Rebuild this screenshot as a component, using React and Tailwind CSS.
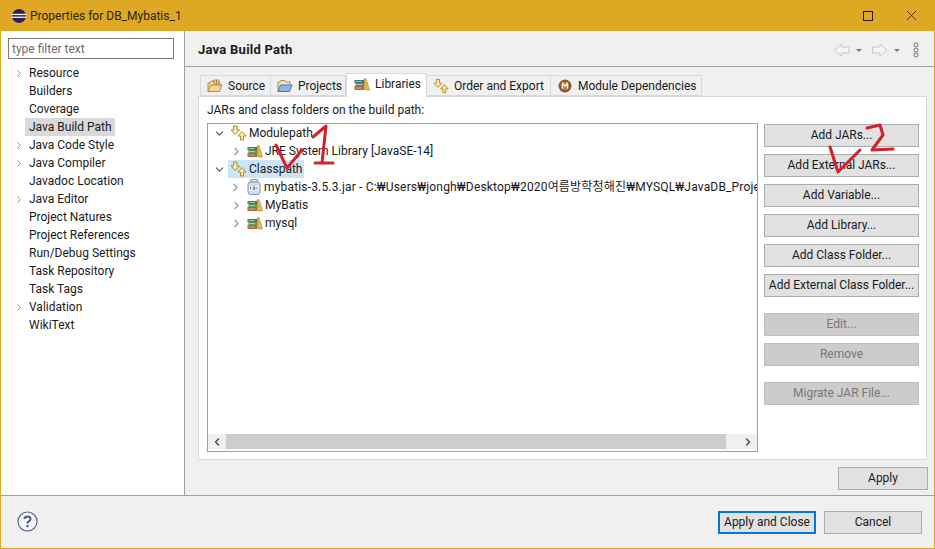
import { ChevronRight, ChevronDown, ChevronLeft, Minus, X } from 'lucide-react';

const FONT = { fontFamily: 'Roboto, "Noto Sans CJK KR", sans-serif' };

const navItems = [
  { label: 'Resource', arrow: true },
  { label: 'Builders' },
  { label: 'Coverage' },
  { label: 'Java Build Path', selected: true },
  { label: 'Java Code Style', arrow: true },
  { label: 'Java Compiler', arrow: true },
  { label: 'Javadoc Location' },
  { label: 'Java Editor', arrow: true },
  { label: 'Project Natures' },
  { label: 'Project References' },
  { label: 'Run/Debug Settings' },
  { label: 'Task Repository' },
  { label: 'Task Tags' },
  { label: 'Validation', arrow: true },
  { label: 'WikiText' },
];

function EclipseLogo() {
  return (
    <svg width="16" height="16" viewBox="0 0 16 16">
      <circle cx="8" cy="8" r="7" fill="#2c2255" />
      <rect x="0.5" y="5.8" width="15" height="1.3" fill="#f7f1e3" />
      <rect x="0.5" y="8.6" width="15" height="1.3" fill="#f7f1e3" />
    </svg>
  );
}

function LibraryIcon() {
  return (
    <svg width="16" height="13" viewBox="0 0 16 13">
      <rect x="0.5" y="2" width="10" height="3" fill="#3d7480" />
      <rect x="1.5" y="5" width="9" height="3" fill="#5b9c55" />
      <rect x="0.5" y="8" width="10" height="4" fill="#a9683c" />
      <path d="M1.5 3.5 H8 M2.5 6.5 H8 M1.5 10 H8" stroke="#e8e8d8" strokeWidth="0.6" />
      <path d="M10 1 L12 0.5 L15.5 12 L11.5 12 Z" fill="#eabb45" stroke="#a97f22" strokeWidth="0.6" />
    </svg>
  );
}

function OrderIcon() {
  return (
    <svg width="17" height="16" viewBox="0 0 17 16" fill="#fbe9a8" stroke="#b08a2c" strokeWidth="1">
      <path d="M3.5 1 H7 V5 H9.5 L5.2 9.5 L1 5 H3.5 Z" />
      <path d="M10.5 15 H13.5 V11 H16 L12 6.5 L8 11 H10.5 Z" />
    </svg>
  );
}

function SourceIcon() {
  return (
    <svg width="16" height="14" viewBox="0 0 16 14">
      <path d="M1 12.5 V4 H3 L4 2 H7 V4 H13 V6" fill="#f5dfa8" stroke="#b08a4a" />
      <path d="M1 12.5 L3.5 6 H15 L12.5 12.5 Z" fill="#f3d596" stroke="#b08a4a" />
      <path d="M7 1 H12 V5 H7 Z M9.5 1 V5 M7 3 H12" fill="#fdf3d8" stroke="#a8743e" strokeWidth="0.8" />
    </svg>
  );
}

function ProjectIcon() {
  return (
    <svg width="16" height="14" viewBox="0 0 16 14">
      <path d="M1 12.5 V3 H3 L4 1.5 H8 L9 3 H13 V6" fill="#f5e4b4" stroke="#a68a50" />
      <path d="M1 12.5 L3.5 6 H15 L12.5 12.5 Z" fill="#8fb7e6" stroke="#4f76a8" />
    </svg>
  );
}

function ModuleIcon() {
  return (
    <svg width="14" height="14" viewBox="0 0 14 14">
      <circle cx="7" cy="7" r="6.5" fill="#8d5a2b" />
      <circle cx="7" cy="7" r="4" fill="#b98a50" />
      <path d="M4.5 9.5 V4.5 L7 7 L9.5 4.5 V9.5" fill="none" stroke="#fff" strokeWidth="1.2" />
    </svg>
  );
}

function JarIcon() {
  return (
    <svg width="14" height="16" viewBox="0 0 14 16">
      <rect x="3" y="0.5" width="8" height="2.5" rx="0.5" fill="#efe3b8" stroke="#a99a68" />
      <rect x="1" y="3" width="12" height="12.5" rx="2.5" fill="#cfdcf0" stroke="#8097b8" />
      <rect x="2" y="7" width="10" height="4.5" fill="#fff" />
      <path d="M3.5 8 V10.5 M6.2 8 H7.8 V10.5 H6.2 Z M10 8 V10.5" stroke="#44557a" strokeWidth="0.8" fill="none" />
    </svg>
  );
}

function Tab({ icon, label, width, active }) {
  return (
    <div
      className={
        active
          ? 'relative z-10 -mb-px flex h-[24px] items-center gap-[5px] whitespace-nowrap border border-b-0 border-[#d9d9d9] bg-white pb-[3px] pl-[7px]'
          : 'mt-[2px] flex h-[21px] items-center gap-[5px] whitespace-nowrap border border-l-0 border-[#d9d9d9] bg-[#f0f0f0] pl-[6px] first:border-l'
      }
      style={{ width }}
    >
      <span className="flex w-[16px] justify-center">{icon}</span>
      <span>{label}</span>
    </div>
  );
}

function TreeRow({ indent, open, icon, label, selected, labelClass }) {
  return (
    <div className="flex h-[18px] items-center whitespace-nowrap">
      <span className="flex w-[14px] justify-center" style={{ marginLeft: indent }}>
        {open ? (
          <ChevronDown size={13} strokeWidth={2} className="text-[#555]" />
        ) : (
          <ChevronRight size={13} strokeWidth={2} className="translate-x-px text-[#999]" />
        )}
      </span>
      <span className={selected ? 'ml-[2px] flex h-[18px] items-center gap-[2px] bg-[#cce4f8] pl-[2px] pr-[2px]' : 'ml-[2px] flex h-[18px] items-center gap-[2px] pl-[2px]'}>
        <span className="flex w-[17px] justify-center">{icon}</span>
        <span className={labelClass}>{label}</span>
      </span>
    </div>
  );
}

function Btn({ label, disabled, className = '' }) {
  return (
    <div
      className={`flex h-[23px] items-center justify-center border pb-px ${
        disabled ? 'border-[#bfbfbf] bg-[#cccccc] text-[#787878]' : 'border-[#adadad] bg-[#e1e1e1]'
      } ${className}`}
    >
      {label}
    </div>
  );
}

export default function App() {
  return (
    <div style={FONT} className="flex h-[549px] w-[935px] flex-col overflow-hidden border-x border-b border-[#dfa824] text-[12px] leading-[16px] text-[#1a1a1a]">
      {/* title bar */}
      <div className="-mx-px flex h-[31px] shrink-0 items-center bg-[#dfa824] pl-[11px] pr-[10px]">
        <EclipseLogo />
        <span className="ml-[3px] text-[#2d2410]">Properties for DB_Mybatis_1</span>
        <div className="ml-auto flex items-center text-[#1a1005]">
          <Minus size={14} strokeWidth={1} className="mr-[31px] text-[#c79a2a]" />
          <div className="mr-[30px] h-[10px] w-[10px] border border-[#2a1000]" />
          <X size={17} strokeWidth={1} className="mr-[5px]" />
        </div>
      </div>

      <div className="flex min-h-0 flex-1">
        {/* left pane */}
        <aside className="w-[184px] shrink-0 border-r border-[#a0a0a0] bg-white pl-[7px] pt-[7px]">
          <div className="flex h-[21px] w-[166px] items-center border border-[#7a7a7a] pl-[3px] text-[#6d6d6d]">type filter text</div>
          <div className="mt-[5px]">
            {navItems.map((item) => (
              <div key={item.label} className="flex h-[18px] items-center">
                <span className="flex w-[17px] justify-center pl-[5px]">
                  {item.arrow && <ChevronRight size={13} strokeWidth={2} className="text-[#999]" />}
                </span>
                <span className={item.selected ? 'flex h-[18px] items-center bg-[#d9d9d9] pl-[4px] pr-[3px]' : 'pl-[4px]'}>{item.label}</span>
              </div>
            ))}
          </div>
        </aside>

        {/* right pane */}
        <main className="flex min-w-0 flex-1 flex-col bg-[#f0f0f0]">
          <div className="flex h-[36px] shrink-0 items-center border-b border-[#a0a0a0] pl-[13px] pr-[8px] pt-[2px]">
            <span className="text-[13px] font-bold tracking-[0.25px]">Java Build Path</span>
            <div className="ml-auto flex items-center">
              <svg width="92" height="16" viewBox="0 0 92 16" fill="none">
                <path d="M0.5 8 L7.5 2 V5 H15 V11 H7.5 V14 Z" fill="#f5f5f5" stroke="#c8c8c8" />
                <path d="M22 7 H28 L25 10 Z" fill="#777" />
                <path d="M53 8 L46 2 V5 H38.5 V11 H46 V14 Z" fill="#f5f5f5" stroke="#c8c8c8" />
                <path d="M60 7 H66 L63 10 Z" fill="#777" />
                <circle cx="82" cy="3" r="2" stroke="#777" />
                <circle cx="82" cy="8" r="2" stroke="#777" />
                <circle cx="82" cy="13" r="2" stroke="#777" />
              </svg>
            </div>
          </div>

          <div className="ml-[13px] mt-[6px] w-[729px]">
            <div className="relative z-10 flex items-start pl-[2px]">
              <Tab icon={<SourceIcon />} label="Source" width={71} />
              <Tab icon={<ProjectIcon />} label="Projects" width={75} />
              <Tab icon={<LibraryIcon />} label="Libraries" width={81} active />
              <Tab icon={<OrderIcon />} label="Order and Export" width={124} />
              <Tab icon={<ModuleIcon />} label="Module Dependencies" width={151} />
            </div>

            <div className="flex h-[364px] gap-[6px] border border-[#d9d9d9] bg-white pl-[8px] pt-[5px]">
              <div className="w-[551px] shrink-0">
                <div className="h-[21px]">JARs and class folders on the build path:</div>
                <div className="flex h-[329px] flex-col border border-[#a0a0a0] pb-[2px]">
                  <div className="min-h-0 flex-1 overflow-hidden pl-[4px]">
                    <TreeRow open indent={0} icon={<OrderIcon />} label="Modulepath" />
                    <TreeRow indent={16} icon={<LibraryIcon />} label="JRE System Library [JavaSE-14]" />
                    <TreeRow open indent={0} icon={<OrderIcon />} label="Classpath" selected />
                    <TreeRow
                      indent={16}
                      icon={<JarIcon />}
                      labelClass="tracking-[0.17px]"
                      label="mybatis-3.5.3.jar - C:₩Users₩jongh₩Desktop₩2020여름방학청해진₩MYSQL₩JavaDB_Project"
                    />
                    <TreeRow indent={16} icon={<LibraryIcon />} label="MyBatis" />
                    <TreeRow indent={16} icon={<LibraryIcon />} label="mysql" />
                  </div>
                  <div className="flex h-[15px] shrink-0 items-stretch bg-[#f0f0f0]">
                    <span className="flex w-[18px] items-center justify-center"><ChevronLeft size={12} strokeWidth={3} className="text-[#505050]" /></span>
                    <div className="flex-1 bg-[#cdcdcd]" />
                    <span className="ml-[13px] flex w-[18px] items-center justify-center"><ChevronRight size={12} strokeWidth={3} className="text-[#505050]" /></span>
                  </div>
                </div>
              </div>

              <div className="flex w-[155px] flex-col pt-[22px]">
                <Btn label="Add JARs..." />
                <Btn label="Add External JARs..." className="mt-[7px]" />
                <Btn label="Add Variable..." className="mt-[7px]" />
                <Btn label="Add Library..." className="mt-[7px]" />
                <Btn label="Add Class Folder..." className="mt-[7px]" />
                <Btn label="Add External Class Folder..." className="mt-[7px]" />
                <Btn label="Edit..." disabled className="mt-[16px]" />
                <Btn label="Remove" disabled className="mt-[7px]" />
                <Btn label="Migrate JAR File..." disabled className="mt-[16px]" />
              </div>
            </div>

            <div className="-mr-px mt-[7px] flex justify-end">
              <Btn label="Apply" className="w-[90px]" />
            </div>
          </div>
        </main>
      </div>

      {/* bottom bar */}
      <div className="flex h-[53px] shrink-0 items-center border-t border-[#a0a0a0] bg-[#f0f0f0] pl-[16px] pr-[12px] pt-px">
        <svg className="-mt-[2px]" width="21" height="21" viewBox="0 0 21 21" fill="none">
          <circle cx="10.5" cy="10.5" r="9.5" fill="#f5f6fa" stroke="#5d6a8c" strokeWidth="1.2" />
          <path d="M7.5 8 C7.5 4.6 13.5 4.6 13.5 8 C13.5 10.3 10.5 10 10.5 12.5" stroke="#4e5b7e" strokeWidth="2" />
          <rect x="9.4" y="14" width="2.2" height="2.2" fill="#4e5b7e" />
        </svg>
        <div className="ml-auto flex gap-[8px]">
          <div className="flex h-[23px] w-[98px] items-center justify-center border-2 border-[#0078d7] bg-[#e1e1e1] pb-px">Apply and Close</div>
          <Btn label="Cancel" className="w-[98px]" />
        </div>
      </div>

      {/* red pen marks drawn over the screenshot */}
      <svg className="pointer-events-none absolute left-0 top-0" width="935" height="549" fill="none" stroke="#d4202c" strokeWidth="3" strokeLinecap="round" strokeLinejoin="round">
        <path d="M276 145 L287 168 L302 150" />
        <path d="M313 137 L326 126 L322 163 M315 163 L333 163" />
        <path d="M830 147 L838 172 L860 150" />
        <path d="M867 128 L880 125 L883 135 L872 150 L893 149" />
      </svg>
    </div>
  );
}
